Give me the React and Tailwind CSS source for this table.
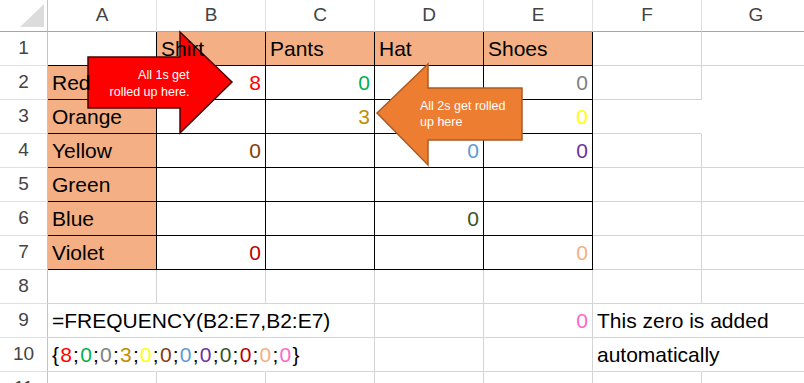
import React from "react";

const COLS = ["A", "B", "C", "D", "E", "F", "G"];

const C = {
  red: "#FF0000",
  green: "#00B050",
  gray: "#808080",
  gold: "#BF8F00",
  yellow: "#FFFF00",
  brown: "#843C0C",
  blue: "#5B9BD5",
  purple: "#7030A0",
  dkgreen: "#375623",
  dkred: "#C00000",
  ltorange: "#F4B084",
  pink: "#FF66CC",
};

const ARRAY = [
  ["8", C.red],
  ["0", C.green],
  ["0", C.gray],
  ["3", C.gold],
  ["0", C.yellow],
  ["0", C.brown],
  ["0", C.blue],
  ["0", C.purple],
  ["0", C.dkgreen],
  ["0", C.dkred],
  ["0", C.ltorange],
  ["0", C.pink],
];

function ArrayText() {
  return (
    <span className="tracking-[1.2px]">
      {"{"}
      {ARRAY.map(([v, col], i) => (
        <React.Fragment key={i}>
          <span style={{ color: col }}>{v}</span>
          {i < ARRAY.length - 1 && ";"}
        </React.Fragment>
      ))}
      {"}"}
    </span>
  );
}

// row -> col index (1 = A) -> cell
const DATA = {
  1: { 2: { t: "Shirt" }, 3: { t: "Pants" }, 4: { t: "Hat" }, 5: { t: "Shoes" } },
  2: { 1: { t: "Red" }, 2: { n: "8", c: C.red }, 3: { n: "0", c: C.green }, 5: { n: "0", c: C.gray } },
  3: { 1: { t: "Orange" }, 3: { n: "3", c: C.gold }, 5: { n: "0", c: C.yellow } },
  4: { 1: { t: "Yellow" }, 2: { n: "0", c: C.brown }, 4: { n: "0", c: C.blue }, 5: { n: "0", c: C.purple } },
  5: { 1: { t: "Green" } },
  6: { 1: { t: "Blue" }, 4: { n: "0", c: C.dkgreen } },
  7: { 1: { t: "Violet" }, 2: { n: "0", c: C.dkred }, 5: { n: "0", c: C.ltorange } },
  9: { 1: { t: "=FREQUENCY(B2:E7,B2:E7)" }, 5: { n: "0", c: C.pink }, 6: { t: "This zero is added" } },
  10: { 1: { t: <ArrayText /> }, 6: { t: "automatically" } },
};

const inTable = (r, c) => r >= 1 && r <= 7 && c >= 1 && c <= 5 && !(r === 1 && c === 1);
const isOrange = (r, c) => (r === 1 && c >= 2 && c <= 5) || (c === 1 && r >= 2 && r <= 7);

const HIDE_RIGHT = ["9-1", "9-2", "10-1", "10-2", "9-6", "10-6", "3-6"];
const HIDE_BOTTOM = ["2-7", "3-7"];

function rightClass(r, c) {
  if (HIDE_RIGHT.includes(`${r}-${c}`)) return "border-r-transparent";
  if (inTable(r, c) || inTable(r, c + 1)) return "border-r-black";
  return "border-r-[#d4d4d4]";
}

function bottomClass(r, c) {
  if (HIDE_BOTTOM.includes(`${r}-${c}`)) return "border-b-transparent";
  if (inTable(r, c) || inTable(r + 1, c)) return "border-b-black";
  return "border-b-[#d4d4d4]";
}

function Cell({ r, c }) {
  const d = (DATA[r] && DATA[r][c]) || null;
  const bg = isOrange(r, c) ? "bg-[#F4B084]" : "";
  return (
    <div
      className={`w-[109px] h-[34px] shrink-0 border-r border-b ${rightClass(r, c)} ${bottomClass(r, c)} ${bg} flex items-center ${
        d && d.n ? "justify-end pr-[4px]" : "justify-start pl-[4px]"
      }`}
    >
      {d && d.n && <span style={{ color: d.c }}>{d.n}</span>}
      {d && d.t && <span className="whitespace-nowrap relative z-10 text-black">{d.t}</span>}
    </div>
  );
}

function Callouts() {
  const font = "'Liberation Sans', Arial, sans-serif";
  return (
    <svg className="absolute left-0 top-0 pointer-events-none" width="804" height="383">
      <polygon
        points="88,57 180,57 180,32 232,82 180,133 180,108 88,108"
        fill="#FF0000"
        stroke="#4a0505"
        strokeWidth="1.5"
      />
      <text x="189.5" y="78.5" textAnchor="end" fill="#fff" fontSize="12.5" fontFamily={font}>
        All 1s get
      </text>
      <text x="189.5" y="95.5" textAnchor="end" fill="#fff" fontSize="12.5" fontFamily={font}>
        rolled up here.
      </text>
      <polygon
        points="377,113 428,64 428,88 522,88 522,140 428,140 428,165"
        fill="#ED7D31"
        stroke="#AE5A21"
        strokeWidth="1.5"
      />
      <text x="420" y="110" fill="#fff" fontSize="12.5" fontFamily={font}>
        All 2s get rolled
      </text>
      <text x="420" y="126" fill="#fff" fontSize="12.5" fontFamily={font}>
        up here
      </text>
    </svg>
  );
}

export default function App() {
  const rows = [1, 2, 3, 4, 5, 6, 7, 8, 9, 10, 11];
  return (
    <div className="w-[804px] h-[383px] overflow-hidden bg-white relative font-['Liberation_Sans',Arial,sans-serif] text-[21px] text-black">
      <div className="flex flex-col">
        <div className="flex h-[32px] shrink-0 text-[19px] text-[#444]">
          <div className="w-[48px] h-[32px] shrink-0 border-r border-b border-r-[#c4c4c4] border-b-[#a6a6a6] relative">
            <svg className="absolute left-0 top-0" width="48" height="32">
              <polygon points="44,4 44,27 20,27" fill="#dcdcdc" />
            </svg>
          </div>
          {COLS.map((col) => (
            <div
              key={col}
              className="w-[109px] h-[32px] shrink-0 border-r border-b border-r-[#e0e0e0] border-b-[#a6a6a6] flex items-center justify-center"
            >
              {col}
            </div>
          ))}
        </div>
        {rows.map((r) => (
          <div key={r} className="flex h-[34px] shrink-0">
            <div className="w-[48px] h-[34px] shrink-0 border-r border-b border-r-[#c4c4c4] border-b-[#e0e0e0] flex items-center justify-center text-[19px] text-[#444]">
              {r}
            </div>
            {COLS.map((_, i) => (
              <Cell key={i} r={r} c={i + 1} />
            ))}
          </div>
        ))}
      </div>
      <Callouts />
    </div>
  );
}
